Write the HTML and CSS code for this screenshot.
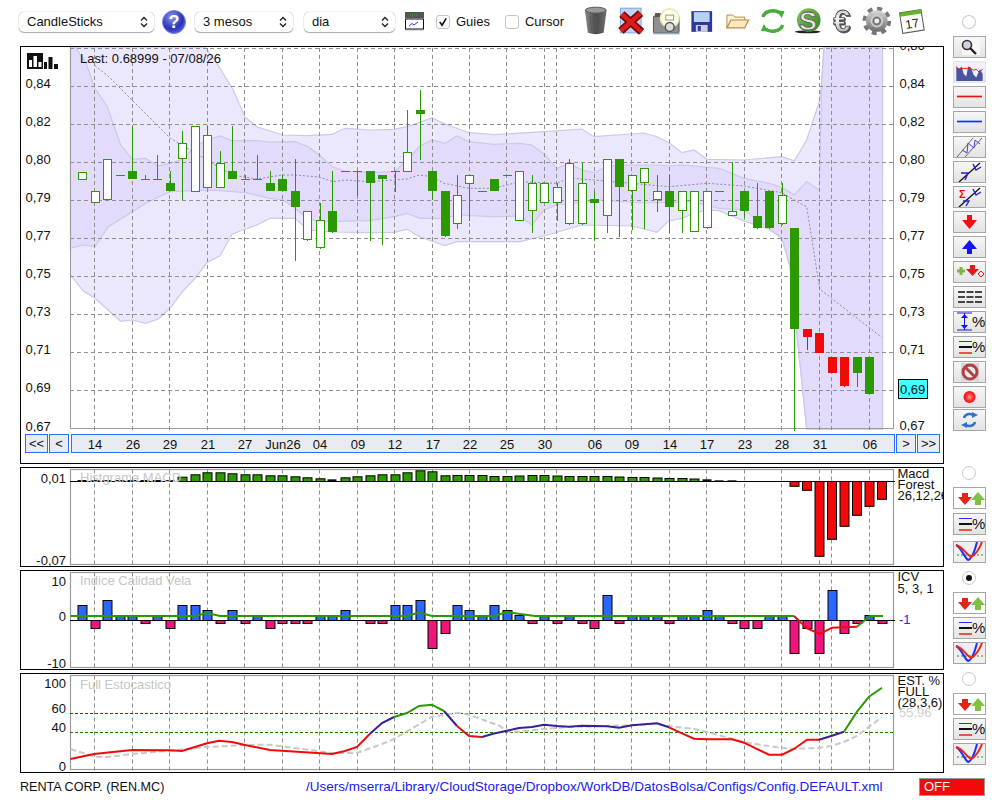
FILE: index.html
```html
<!DOCTYPE html>
<html lang="en">
<head>
    <meta charset="UTF-8">
    <title>RENTA CORP. (REN.MC)</title>
    <link rel="stylesheet" href="styles.css">
</head>
<body>
<svg class="defs">
    <defs>
        <linearGradient id="g-trash" x1="0" y1="0" x2="1" y2="0">
            <stop offset="0" stop-color="#8a8a8a"/><stop offset=".5" stop-color="#4a4a4a"/><stop offset="1" stop-color="#6e6e6e"/>
        </linearGradient>
        <linearGradient id="g-green" x1="0" y1="0" x2="1" y2="1">
            <stop offset="0" stop-color="#8bd04f"/><stop offset="1" stop-color="#2e7b2e"/>
        </linearGradient>
        <linearGradient id="g-silver" x1="0" y1="0" x2="0" y2="1">
            <stop offset="0" stop-color="#d8d8d8"/><stop offset="1" stop-color="#6c6c6c"/>
        </linearGradient>
        <linearGradient id="g-euro" x1="0" y1="0" x2="0" y2="1">
            <stop offset="0" stop-color="#bdbdbd"/><stop offset=".5" stop-color="#f4f4f4"/><stop offset="1" stop-color="#8c8c8c"/>
        </linearGradient>
        <radialGradient id="g-help" cx=".4" cy=".3" r=".8">
            <stop offset="0" stop-color="#8b97ee"/><stop offset=".6" stop-color="#2b33b8"/><stop offset="1" stop-color="#5a6ce0"/>
        </radialGradient>
        <radialGradient id="g-ball" cx=".5" cy=".5" r=".5">
            <stop offset="0" stop-color="#ff9a9a"/><stop offset=".7" stop-color="#f22"/><stop offset="1" stop-color="#e11"/>
        </radialGradient>
    </defs>
    <symbol id="i-updown" viewBox="0 0 31 20">
        <polygon points="8,5 14,5 14,9 18,9 11,17 4,9 8,9" fill="#e2231a"/>
        <polygon points="21,17 27,17 27,12 31,12 24,4 17,12 21,12" fill="#7dc242"/>
    </symbol>
    <symbol id="i-lines" viewBox="0 0 31 20">
        <rect x="5" y="4" width="13" height="1" fill="#2030ff"/>
        <rect x="5" y="9" width="13" height="2" fill="#111"/>
        <rect x="5" y="15" width="13" height="2" fill="#f05040"/>
        <text x="18" y="15" class="pct">%</text>
    </symbol>
    <symbol id="i-curves" viewBox="0 0 31 20">
        <rect width="31" height="20" fill="#efefef"/>
        <path d="M3 13H30" stroke="#2a9a00" stroke-dasharray="2 2" fill="none"/>
        <path d="M2 3C7 5 10 15 14 18 18 17 21 8 23 0" stroke="#2030ff" stroke-width="2" fill="none"/>
        <path d="M2 3C9 5 13 13 17 15 21 13 25 8 28 0" stroke="#e22" stroke-width="2" fill="none"/>
    </symbol>
</svg>

<div class="page">
    <div class="left">
        <div class="toolbar">
            <div class="select sel-type"><span>CandleSticks</span><svg class="chev" viewBox="0 0 8 12"><path d="M1 4.5 4 1.5 7 4.5M1 7.5 4 10.5 7 7.5"/></svg></div>
            <svg class="help" viewBox="0 0 24 24">
                <circle cx="12" cy="12" r="11.5" fill="url(#g-help)" stroke="#7b8ae0"/>
                <text x="12" y="18" class="help-mark">?</text>
            </svg>
            <div class="select sel-range"><span>3 mesos</span><svg class="chev" viewBox="0 0 8 12"><path d="M1 4.5 4 1.5 7 4.5M1 7.5 4 10.5 7 7.5"/></svg></div>
            <div class="select sel-period"><span>dia</span><svg class="chev" viewBox="0 0 8 12"><path d="M1 4.5 4 1.5 7 4.5M1 7.5 4 10.5 7 7.5"/></svg></div>
            <svg class="win" viewBox="0 0 19 19">
                <rect width="19" height="19" fill="#ddd"/>
                <rect width="19" height="6" fill="#555"/>
                <path d="M5 3H13" stroke="#2c2" stroke-dasharray="1 1"/>
                <rect x=".5" y="7" width="18" height="10" fill="#fff" stroke="#111"/>
                <path d="M4 14 7 11.5 9 13 13 10" stroke="#2030ff" fill="none"/>
            </svg>
            <label class="check on"><svg viewBox="0 0 13 13"><path d="M3 6.5 5.5 10 10 2.5"/></svg></label>
            <span class="check-label">Guies</span>
            <label class="check check-2"></label>
            <span class="check-label">Cursor</span>

            <div class="icons">
                <svg viewBox="0 0 36 44">
                    <path d="M7 10Q18 5 29 10L26 33Q18 36 10 33Z" fill="url(#g-trash)"/>
                    <ellipse cx="18" cy="10" rx="10.5" ry="3" fill="#999" stroke="#555"/>
                    <path d="M12 16 14 31M18 16V32M24 16 22 31" stroke="#5c5c5c" fill="none"/>
                </svg>
                <svg viewBox="0 0 36 44">
                    <rect x="7.5" y="8" width="21" height="25" fill="#bdd4f7" stroke="#7fa3e0"/>
                    <path d="M8 31 28 13M9 14 29 32" stroke="#7c0404" stroke-width="8" fill="none"/>
                    <path d="M8 31 28 13M9 14 29 32" stroke="#d91c1c" stroke-width="4.5" fill="none"/>
                </svg>
                <svg viewBox="0 0 36 44">
                    <rect x="4.5" y="16" width="26" height="17" rx="1" fill="#8e8e8e" stroke="#555"/>
                    <rect x="6" y="13" width="8" height="4" fill="#555"/>
                    <circle cx="21" cy="18" r="9.5" fill="#fffde8" stroke="#ece8b4" stroke-width="1.5"/>
                    <rect x="17" y="15" width="8" height="5" fill="none" stroke="#999"/>
                    <circle cx="21" cy="27" r="4.5" fill="#ddd" stroke="#555" stroke-width="1.5"/>
                    <rect x="4" y="33" width="27" height="1.5" fill="#9ab"/>
                </svg>
                <svg viewBox="0 0 36 44">
                    <rect x="7.500" y="11" width="21" height="21" fill="#2f359f"/>
                    <rect x="10" y="12" width="16" height="10" fill="#b3d2f4"/>
                    <rect x="12" y="25" width="12" height="7" fill="#ccd"/>
                    <rect x="14" y="26" width="3" height="5" fill="#2f359f"/>
                </svg>
                <svg viewBox="0 0 36 44">
                    <path d="M7 28V15H13L15 17H25V20" fill="#fdf3d8" stroke="#b98a4a"/>
                    <path d="M7 28 11 20H29L25 28Z" fill="#fce8bd" stroke="#b98a4a" stroke-width="1.2"/>
                </svg>
                <svg viewBox="0 0 36 44">
                    <path d="M8 17C10 10 21 9 25 13" stroke="#49ab3a" stroke-width="3.500" fill="none"/>
                    <polygon points="22,10 30,11 27,18" fill="#49ab3a"/>
                    <path d="M28 25C26 32 15 33 11 29" stroke="#49ab3a" stroke-width="3.500" fill="none"/>
                    <polygon points="14,32 6,31 9,24" fill="#49ab3a"/>
                </svg>
                <svg viewBox="0 0 36 44">
                    <ellipse cx="17" cy="32" rx="13" ry="1.5" fill="#222"/>
                    <circle cx="18" cy="20" r="12" fill="url(#g-green)"/>
                    <text x="17" y="30" class="coin">S</text>
                </svg>
                <svg viewBox="0 0 36 44">
                    <text x="16" y="32" class="euro">€</text>
                </svg>
                <svg viewBox="0 0 36 44">
                    <circle cx="15" cy="21" r="12.500" fill="none" stroke="#777" stroke-width="4" stroke-dasharray="5 4.82"/>
                    <circle cx="15" cy="21" r="11" fill="url(#g-silver)"/>
                    <circle cx="15" cy="21" r="5.500" fill="#777" stroke="#ccc" stroke-width="2"/>
                    <circle cx="15" cy="21" r="2.500" fill="#eee"/>
                </svg>
                <svg viewBox="0 0 36 44">
                    <g transform="rotate(-9 15 21)">
                        <rect x="4" y="11" width="22" height="21" fill="#fff" stroke="#555"/>
                        <rect x="4" y="11" width="22" height="4" fill="#63b42d"/>
                        <text x="15" y="28" class="cal">17</text>
                    </g>
                </svg>
            </div>
        </div>

        <div class="panels">
            <div class="panel panel-main">
                <svg id="chart-main" class="plot plot-main" viewBox="21 47 922 385"></svg>
                <div class="datebar">
                    <button class="nav nav-2">&lt;&lt;</button>
                    <button class="nav nav-1">&lt;</button>
                    <div class="dates"><svg id="chart-dates" viewBox="71 435 822 17"></svg></div>
                    <button class="nav nav-1">&gt;</button>
                    <button class="nav nav-2">&gt;&gt;</button>
                </div>
            </div>
            <div class="panel panel-sub">
                <svg id="chart-macd" class="plot" viewBox="21 468 922 98"></svg>
            </div>
            <div class="panel panel-sub">
                <svg id="chart-icv" class="plot" viewBox="21 571 922 98"></svg>
            </div>
            <div class="panel panel-sub">
                <svg id="chart-sto" class="plot" viewBox="21 674 922 98"></svg>
            </div>
        </div>
    </div>

    <div class="side">
        <span class="radio"></span>
        <div class="tools">
            <div class="tool"><svg viewBox="0 0 31 20"><rect x="8" y="1" width="18" height="17" fill="#f8f8f8"/><circle cx="13" cy="8" r="4.5" fill="#cfd4d8" stroke="#333" stroke-width="1.6"/><path d="M16 11 22 17" stroke="#222" stroke-width="2.4"/></svg></div>
            <div class="tool tool-flat"><svg viewBox="0 0 31 22"><rect width="31" height="22" fill="#eef0fa"/><path d="M1 21V4L4 8 7 5 9 13 12 16 14 5 17 6 20 14 23 17 25 12 27 8 30 13V21Z" fill="#47569f"/><path d="M1 8 6 7H16L20 9 23 8 26 11 30 8" stroke="#e11" fill="none"/></svg></div>
            <div class="tool"><svg viewBox="0 0 31 20"><rect x="3" y="8" width="25" height="3" fill="#f6a0a0"/><rect x="3" y="9" width="25" height="1" fill="#e11"/></svg></div>
            <div class="tool"><svg viewBox="0 0 31 20"><rect x="3" y="8" width="25" height="3" fill="#9ab0ff"/><rect x="3" y="9" width="25" height="1" fill="#1428ff"/></svg></div>
            <div class="tool"><svg viewBox="0 0 31 20"><path d="M3 20 19 1M11 20 28 1" stroke="#666" fill="none"/><path d="M8 13 13 16 14 6 20 11 21 3 26 7" stroke="#4b3bf0" fill="none"/></svg></div>
            <div class="tool"><svg viewBox="0 0 31 20"><path d="M5 20 26 1" stroke="#111" stroke-width="1.3" fill="none"/><path d="M19 2 22 8 27 5M7 11 14 11 11 18" stroke="#2a1fd0" stroke-width="1.4" fill="none"/></svg></div>
            <div class="tool"><svg viewBox="0 0 31 20"><path d="M5 20 26 1" stroke="#111" stroke-width="1.3" fill="none"/><path d="M19 2 22 8 27 5M9 14H15L12 19" stroke="#2a1fd0" stroke-width="1.4" fill="none"/><text x="5" y="11" class="sigma">Σ</text></svg></div>
            <div class="tool"><svg viewBox="0 0 31 20"><polygon points="13,3 18,3 18,8 23,8 15.500,17 8,8 13,8" fill="#f01010"/></svg></div>
            <div class="tool"><svg viewBox="0 0 31 20"><polygon points="13,17 18,17 18,12 23,12 15.500,3 8,12 13,12" fill="#1414f0"/></svg></div>
            <div class="tool"><svg viewBox="0 0 31 20"><path d="M3 9H11M7 5V13" stroke="#7db742" stroke-width="3"/><polygon points="16,3 21,3 21,7 25,7 18.500,14 12,7 16,7" fill="#d92020"/><polygon points="27,9 30,12 27,15 24,12" fill="#fff" stroke="#e11"/></svg></div>
            <div class="tool"><svg viewBox="0 0 31 20"><path d="M4 5H28M4 10H28M4 15H28" stroke="#444" stroke-width="2" stroke-dasharray="7 1.500" fill="none"/></svg></div>
            <div class="tool"><svg viewBox="0 0 31 20"><path d="M3 1H18M3 18H18" stroke="#1414f0"/><path d="M10.500 1V18" stroke="#1414f0"/><polygon points="10.500,2 14,6 7,6" fill="#1414f0"/><polygon points="10.500,17 14,13 7,13" fill="#1414f0"/><text x="18" y="15" class="pct">%</text></svg></div>
            <div class="tool"><svg><use href="#i-lines"/></svg></div>
            <div class="tool"><svg viewBox="0 0 31 20"><rect x="7" y="1" width="18" height="18" fill="#d5d5da"/><circle cx="16" cy="10" r="7" fill="#eee" stroke="#b34040" stroke-width="3"/><path d="M11 5 21 15" stroke="#b34040" stroke-width="3"/></svg></div>
            <div class="tool"><svg viewBox="0 0 31 20"><circle cx="15.500" cy="10" r="6" fill="url(#g-ball)"/></svg></div>
            <div class="tool tool-last"><svg viewBox="0 0 31 20"><path d="M10 8C11 4 16 3 19 5" stroke="#2f6fd0" stroke-width="2.500" fill="none"/><polygon points="18,2 24,5 18,8" fill="#2f6fd0"/><path d="M21 12C20 16 15 17 12 15" stroke="#2f6fd0" stroke-width="2.500" fill="none"/><polygon points="13,12 7,15 13,18" fill="#2f6fd0"/></svg></div>
        </div>

        <div class="side-group group-macd">
            <span class="radio"></span>
            <div class="tool tool-white"><svg><use href="#i-updown"/></svg></div>
            <div class="tool tool-push"><svg><use href="#i-lines"/></svg></div>
            <div class="tool tool-push2"><svg><use href="#i-curves"/></svg></div>
        </div>
        <div class="side-group">
            <span class="radio radio-on"></span>
            <div class="tool tool-white"><svg><use href="#i-updown"/></svg></div>
            <div class="tool"><svg><use href="#i-lines"/></svg></div>
            <div class="tool"><svg><use href="#i-curves"/></svg></div>
        </div>
        <div class="side-group">
            <span class="radio"></span>
            <div class="tool tool-white"><svg><use href="#i-updown"/></svg></div>
            <div class="tool"><svg><use href="#i-lines"/></svg></div>
            <div class="tool"><svg><use href="#i-curves"/></svg></div>
        </div>
    </div>

    <div class="status">
        <span class="status-name">RENTA CORP. (REN.MC)</span>
        <span class="status-path">/Users/mserra/Library/CloudStorage/Dropbox/WorkDB/DatosBolsa/Configs/Config.DEFAULT.xml</span>
        <span class="status-off">OFF</span>
    </div>
</div>

<script src="chart.js"></script>
</body>
</html>
```
FILE: styles.css
```css
* {
    box-sizing: border-box;
}

body {
    margin: 0;
    background: #fff;
    color: #111;
    font: 13px "Liberation Sans", Arial, sans-serif;
}

.defs {
    position: absolute;
    width: 0;
    height: 0;
}

.page {
    display: grid;
    grid-template-columns: 944px 56px;
    grid-template-rows: 773px 27px;
    width: 1000px;
    height: 800px;
    overflow: hidden;
}

/* toolbar */
.toolbar {
    display: flex;
    align-items: center;
    height: 43px;
    padding-left: 19px;
}

.select {
    display: flex;
    align-items: center;
    justify-content: space-between;
    height: 20px;
    padding: 0 6px 0 8px;
    background: #fff;
    border-radius: 5px;
    box-shadow: 0 0 1px rgba(0, 0, 0, .45), 0 1px 1px rgba(0, 0, 0, .3);
    font-size: 13px;
}

.sel-type {
    width: 135px;
}

.sel-range {
    width: 98px;
    margin-left: 9px;
}

.sel-period {
    width: 91px;
    margin-left: 11px;
}

.chev {
    width: 8px;
    height: 12px;
}

.chev path {
    fill: none;
    stroke: #222;
    stroke-width: 1.4;
}

.help {
    width: 24px;
    height: 24px;
    margin-left: 8px;
}

.help-mark {
    fill: #fff;
    font: bold 18px "Liberation Sans", sans-serif;
    text-anchor: middle;
}

.win {
    width: 19px;
    height: 19px;
    margin-left: 10px;
}

.check {
    display: block;
    width: 14px;
    height: 14px;
    margin-left: 12px;
    background: #fff;
    border: 1px solid #c4c4c4;
    border-radius: 3px;
}

.check svg {
    display: block;
    width: 12px;
    height: 12px;
}

.check path {
    fill: none;
    stroke: #111;
    stroke-width: 1.7;
}

.check-2 {
    margin-left: 15px;
}

.check-label {
    margin-left: 6px;
    font-size: 13px;
}

.icons {
    display: flex;
    margin-left: 14px;
}

.icons svg {
    flex: none;
    width: 35.5px;
    height: 44px;
}

.coin {
    fill: #e4e6e2;
    stroke: #555;
    stroke-width: .8;
    font: bold 27px "Liberation Sans", sans-serif;
    text-anchor: middle;
}

.euro {
    fill: url(#g-euro);
    stroke: #444;
    stroke-width: .8;
    font: bold 31px "Liberation Sans", sans-serif;
    text-anchor: middle;
    filter: drop-shadow(1px 1px 0 #555);
}

.cal {
    fill: #222;
    font: 12.5px "Liberation Sans", sans-serif;
    text-anchor: middle;
}

.pct {
    fill: #111;
    font: 15px "Liberation Sans", sans-serif;
}

.sigma {
    fill: #e11;
    font: bold 11px "Liberation Sans", sans-serif;
}

/* chart panels */
.panels {
    display: flex;
    flex-direction: column;
    gap: 3px;
    padding: 3px 0 0 20px;
}

.panel {
    width: 924px;
    background: #fff;
    border: 1px solid #000;
}

.panel-main {
    height: 418px;
}

.panel-sub {
    height: 100px;
}

.plot {
    display: block;
    width: 922px;
    height: 98px;
}

.plot-main {
    height: 385px;
}

.plot text {
    fill: #111;
    font: 13px "Liberation Sans", sans-serif;
}

.plot .wm {
    fill: #c6c6c6;
}

.plot .blue {
    fill: #2222ee;
}

.plot .off {
    fill: #cfcfcf;
}

/* date bar */
.datebar {
    display: flex;
    align-items: stretch;
    height: 19px;
    margin-top: 2px;
    padding-left: 4px;
}

.nav {
    height: 19px;
    margin: 0 1px 0 0;
    padding: 0;
    background: #e9ebf2;
    border: 1px solid #2f6bff;
    color: #111;
    font: 13px "Liberation Sans", sans-serif;
}

.nav-2 {
    width: 23px;
}

.nav-1 {
    width: 20px;
}

.dates {
    width: 824px;
    margin: 0 1px 0 1px;
    background: #e9ebf2;
    border: 1px solid #2f6bff;
}

.dates svg {
    display: block;
    width: 822px;
    height: 17px;
}

.dates text {
    fill: #111;
    font: 13px "Liberation Sans", sans-serif;
    text-anchor: middle;
}

/* right column */
.side {
    display: flex;
    flex-direction: column;
    padding: 15px 0 0 9px;
}

.radio {
    display: block;
    position: relative;
    width: 14px;
    height: 14px;
    margin-left: 9px;
    background: #fff;
    border: 1px solid #c8c8c8;
    border-radius: 50%;
}

.radio-on::after {
    content: "";
    position: absolute;
    top: 3px;
    left: 3px;
    width: 6px;
    height: 6px;
    background: #111;
    border-radius: 50%;
}

.tools {
    display: flex;
    flex-direction: column;
    gap: 3px;
    margin-top: 7px;
}

.tool {
    width: 33px;
    height: 22px;
    background: linear-gradient(#f6f6f6, #e3e3e3);
    border: 1px solid #a6a6a6;
}

.tool svg {
    display: block;
    width: 31px;
    height: 20px;
}

.tool-white {
    background: #fff;
}

.tool-flat {
    border-color: #dfe3f5;
}

.tool-last {
    margin-top: -2px;
}

.side-group {
    display: flex;
    flex-direction: column;
    gap: 3px;
    height: 103px;
}

.side-group .radio {
    margin-bottom: 4px;
}

.group-macd {
    height: 107px;
    margin-top: 35px;
}

.tool-push {
    margin-top: 1px;
}

.tool-push2 {
    margin-top: 3px;
}

/* status line */
.status {
    grid-column: 1 / 3;
    display: flex;
    align-items: center;
    padding: 0 15px 0 20px;
}

.status-name {
    width: 286px;
    font-size: 12.6px;
}

.status-path {
    color: #1a1aee;
    font-size: 13.5px;
}

.status-off {
    width: 66px;
    height: 18px;
    margin-left: auto;
    padding-left: 4px;
    background: #f20a0a;
    border: 1px solid #999;
    color: #fff;
    font-size: 13px;
    line-height: 16px;
}
```
FILE: chart.js
```js
var NS = "http://www.w3.org/2000/svg";
var GREEN = "#2a9a00";
var RED = "#f20a0a";
var GRID = "#8f8f8f";

// vertical grid lines + the labels under them
var aGrid = [94, 132, 169, 207, 244, 282, 319, 357, 394, 432, 469, 506, 544, 556, 594, 631, 669, 706, 744, 781, 819, 831, 869];
var aDates = [[94, "14"], [132, "26"], [169, "29"], [207, "21"], [244, "27"], [282, "Jun26"], [319, "04"], [357, "09"], [394, "12"],
    [432, "17"], [469, "22"], [506, "25"], [544, "30"], [594, "06"], [631, "09"], [669, "14"], [706, "17"], [744, "23"], [781, "28"], [819, "31"], [869, "06"]];

// type, body top, body bottom, high, low
var aCandles = [
    ["w", 172, 179, 172, 180], ["w", 191, 202, 191, 203], ["w", 159, 199, 159, 199], ["d", 175, 175, 175, 175],
    ["f", 171, 179, 126, 179], ["d", 179, 179, 175, 179], ["d", 179, 179, 155, 179], ["f", 183, 191, 171, 191],
    ["w", 143, 158, 131, 200], ["w", 126, 191, 126, 192], ["w", 135, 187, 126, 187], ["w", 163, 187, 151, 188],
    ["f", 171, 179, 126, 179], ["d", 179, 179, 175, 179], ["d", 179, 179, 155, 179], ["f", 183, 191, 171, 191],
    ["f", 179, 191, 175, 191], ["f", 191, 207, 159, 261], ["w", 211, 239, 211, 241], ["w", 220, 247, 203, 249],
    ["f", 211, 232, 171, 233], ["d", 171, 171, 171, 171], ["d", 171, 171, 171, 196], ["f", 171, 183, 171, 241],
    ["f", 175, 179, 175, 245], ["d", 171, 171, 171, 192], ["w", 152, 171, 110, 172], ["f", 110, 114, 90, 160],
    ["f", 171, 191, 171, 200], ["f", 191, 236, 191, 237], ["w", 195, 223, 175, 229], ["w", 175, 183, 175, 221],
    ["d", 191, 191, 191, 191], ["f", 179, 191, 179, 191], ["d", 175, 175, 175, 175], ["w", 171, 220, 171, 221],
    ["w", 183, 210, 175, 233], ["w", 183, 202, 183, 203], ["w", 187, 202, 183, 221], ["w", 163, 223, 159, 225],
    ["w", 183, 223, 163, 225], ["f", 199, 203, 191, 241], ["w", 159, 215, 159, 233], ["f", 159, 187, 159, 237],
    ["w", 175, 190, 175, 230], ["w", 168, 182, 168, 229], ["w", 191, 199, 175, 212], ["f", 191, 207, 175, 233],
    ["w", 191, 210, 191, 233], ["w", 191, 231, 191, 232], ["w", 191, 227, 191, 229], ["d", 191, 191, 191, 191],
    ["w", 211, 215, 162, 216], ["f", 191, 211, 191, 218], ["f", 216, 228, 183, 229], ["f", 191, 228, 191, 229],
    ["w", 195, 223, 183, 225], ["f", 228, 329, 228, 431], ["r", 329, 337, 329, 350], ["r", 333, 353, 333, 353],
    ["r", 357, 373, 357, 373], ["r", 357, 386, 357, 387], ["f", 357, 373, 357, 387], ["f", 357, 394, 357, 394]
];

var aOuter = [[70.5, 47], [205, 47], [216.7, 63], [233.3, 90], [245, 117], [256.7, 126.7], [283, 135], [307, 135.7], [332, 134.3], [345, 128.3],
    [370, 130], [394, 129.3], [407, 126.7], [432, 118], [445, 124], [469, 132.7], [494, 134.7], [544, 131.7], [582, 129], [594, 136.7],
    [644, 133], [657, 136.7], [669, 142.7], [682, 152.7], [694, 150], [707, 159.3], [744, 160], [782, 156.7], [794.3, 160.7], [806.7, 140],
    [819.3, 101.7], [821.7, 83], [824, 47], [882.5, 47], [882.5, 429], [806.7, 429], [790, 266.7], [782, 238.3], [769, 229.3], [744, 221],
    [719, 210.7], [707, 210], [694, 213.3], [682, 218.3], [669, 220.7], [657, 232.3], [632, 226], [582, 225], [544, 236], [520, 241.7],
    [457, 241.7], [445, 245.7], [420, 237], [407, 229.3], [394, 232.3], [370, 232.7], [333, 232], [308, 230], [295, 218.3], [270, 218.3],
    [257, 225], [245, 229.3], [232.3, 234], [220, 255.7], [207.3, 262.3], [195, 278.3], [183.3, 290.7], [170, 308.3], [158.3, 319],
    [145.7, 323.3], [132.3, 320], [120.7, 321.3], [95, 298.3], [83.3, 291], [70.5, 275]];

var aInner = [[70.5, 47], [75, 47], [86, 63], [95, 88.3], [107.3, 106.7], [120.7, 145], [132.3, 159.3], [145.7, 158.3], [157.3, 166], [170, 163.3],
    [182.3, 159.3], [195, 146.7], [207.3, 140], [220, 136], [232.3, 140.7], [257.3, 140.7], [270, 142], [295, 141.7], [308.3, 146.7], [319.3, 155],
    [332.3, 166.7], [345, 171], [370, 172.7], [394.3, 171.7], [407, 160], [420, 146], [432, 140], [445, 143.3], [457, 136], [469, 141.7],
    [494, 144.3], [520, 143.3], [532, 145], [544, 154.3], [557, 168.3], [569, 163.3], [582, 170], [594, 172.7], [607, 166.7], [619, 165],
    [657, 165], [669, 166], [682, 165], [719, 168.3], [744, 178.3], [769, 183.3], [782, 187.3], [794.3, 195], [806.7, 181.7], [819.3, 190],
    [821.7, 83], [824, 47], [882.5, 47], [882.5, 429], [806.7, 429], [790, 266.7], [782, 238.3], [769, 228.3], [744, 210], [719, 208.3],
    [694, 201.7], [644, 203], [600, 200], [557, 205], [544, 210], [532, 225], [520, 216], [494, 216.7], [457, 215], [445, 218.3], [420, 218.3],
    [407, 213.3], [394.3, 216.7], [369, 220.7], [319, 221.7], [307.3, 218.3], [295, 208.3], [283, 200], [270, 198.3], [245, 192.7], [220, 190.7],
    [207.3, 190], [170, 191.7], [145.7, 203.3], [108.3, 226.7], [95, 246.7], [83.3, 245], [70.5, 248.3]];

var aAverage = [[95, 65.7], [108, 76], [132, 100], [170, 138], [187, 148], [207, 160], [220, 168], [232, 175], [257, 179], [282, 175], [295, 175],
    [319, 177], [333, 181.7], [345, 180], [370, 181.7], [407, 179], [419, 175], [432, 176.7], [444, 183.3], [469, 188.3], [494, 188.3], [520, 181.7],
    [557, 183.3], [569, 178], [594, 180], [669, 186.7], [707, 183.3], [744, 186], [782, 192.7], [800, 203.3], [806.7, 206.7], [811.7, 238],
    [816.7, 270], [820, 289.3], [881.7, 337.3]];

// tops of the MACD bars, index 0 = first candle
var aMacd = [480, 480, 480, 480, 480, 480, 480, 480, 476.7, 474.3, 472.3, 472.3, 473.3, 474.3, 474.3, 475.3, 475.3, 476.3, 477.3, 478.3, 479.3, 477.3, 476.3, 475.3,
    474.3, 474.3, 472.3, 470.3, 471.3, 475.3, 475, 475, 475, 476, 476, 475.5, 475, 475, 475.5, 476, 476, 476, 476, 476.5, 477, 477, 477.5, 478, 478, 478.5, 479.3,
    480.3, 480.3, 481, 481, 481];
var aMacdDown = [[794, 486.3], [806.5, 490.3], [819, 556.3], [831.5, 539.3], [844, 526.3], [856.5, 515.3], [869, 506.3], [881.5, 499.3]];

var aIcv = [3, -2, 4, 1, 1, -1, 1, -2, 3, 3, 2, -1, 2, -1, 1, -2, -1, -1, -1, 1, 1, 2, 0, -1, -1, 3, 3, 4, -6, -3,
    3, 2, 1, 3, 2, 1, -1, 1, -1, 1, -1, -2, 5, -1, 1, 1, 1, -1, 1, 1, 2, 1, -1, -2, -2, 1, 1, -7, -2, -7, 6, -3, -1, 1, -1];

var aSignal = [[70.5, 749], [95, 757], [108, 757], [132, 754], [169, 750.7], [207, 747], [245, 745], [270, 744.7], [332, 753], [357, 753], [382, 744],
    [394, 739], [432, 716.7], [457, 712.7], [469, 714.7], [500, 726], [507, 731.5], [519, 731.7], [544, 729], [569, 727], [594, 726.5], [657, 724],
    [669, 726], [694, 729], [707, 732], [744, 742], [781, 748], [794, 748.7], [819, 748], [831, 746], [844, 742], [857, 736], [882, 717]];
var aStoch = [
    [RED, [[70.5, 759], [94, 754], [132, 750], [169, 750.3], [182, 751], [207, 743.3], [219, 740.7], [232, 742], [245, 745], [270, 750], [332, 754], [345, 751], [357, 747], [370, 733.7]]],
    ["#3a1f96", [[370, 733.7], [382, 723], [394, 717]]],
    [GREEN, [[394, 717], [407, 713], [419, 706], [432, 704.7], [444, 711]]],
    ["#3a1f96", [[444, 711], [457, 726]]],
    [RED, [[457, 726], [469, 736], [482, 737]]],
    ["#3a1f96", [[482, 737], [494, 733.5], [507, 730.7], [519, 728], [532, 727], [544, 724.7], [557, 726], [569, 726.7], [582, 725.7], [607, 726.3], [619, 727.7], [632, 725.3], [657, 723.3], [669, 727.3]]],
    [RED, [[669, 727.3], [682, 733.3], [694, 738.7], [707, 739.3], [732, 739.3], [744, 742.7], [769, 754.7], [782, 754.7], [794, 749], [807, 739.7], [819, 739.7]]],
    ["#3a1f96", [[819, 739.7], [832, 735.7], [844, 731.7]]],
    [GREEN, [[844, 731.7], [857, 711.7], [869, 696.7], [882, 687.7]]]
];

function add(oSvg, tag, attrs, txt) {
    var o = document.createElementNS(NS, tag);
    for (var k in attrs) {
        o.setAttribute(k, attrs[k]);
    }
    if (txt) {
        o.textContent = txt;
    }
    oSvg.appendChild(o);
    return o;
}

function text(oSvg, x, y, txt, cls, anchor) {
    return add(oSvg, "text", {x: x, y: y, "class": cls || "", "text-anchor": anchor || "start"}, txt);
}

function line(oSvg, x1, y1, x2, y2, color, dash) {
    return add(oSvg, "line", {x1: x1, y1: y1, x2: x2, y2: y2, stroke: color, "stroke-dasharray": dash || "none"});
}

function poly(oSvg, pts, color, width, dash) {
    return add(oSvg, "polyline", {
        points: pts.join(" "), fill: "none", stroke: color, "stroke-width": width, "stroke-dasharray": dash || "none"
    });
}

function barX(i) {
    return Math.round(82.3 + 12.49 * i);
}

function frame(oSvg, top, bottom) {
    add(oSvg, "rect", {x: 70.5, y: top, width: 823, height: bottom - top, fill: "none", stroke: "#9a9a9a", "stroke-width": 1.2});
    for (var i = 0; i < aGrid.length; i++) {
        line(oSvg, aGrid[i] + .5, top, aGrid[i] + .5, bottom + 3, GRID, "4 3");
    }
}

function drawMain() {
    var oSvg = document.getElementById("chart-main");
    add(oSvg, "polygon", {points: aOuter.join(" "), fill: "#ebe7fd", stroke: "#cdc7ea", "stroke-width": 1.2});
    add(oSvg, "polygon", {points: aInner.join(" "), fill: "#e2dbfb", stroke: "#cdc7ea", "stroke-width": 1.2});

    var aY = [["0,86", 48], ["0,84", 86], ["0,82", 124], ["0,80", 162], ["0,79", 200], ["0,77", 238], ["0,75", 276], ["0,73", 314], ["0,71", 352], ["0,69", 390], ["0,67", 428]];
    for (var i = 0; i < aY.length; i++) {
        if (i > 0 && i < 10) {
            line(oSvg, 70, aY[i][1] + .5, 893, aY[i][1] + .5, GRID, "4 3");
            text(oSvg, 25.5, aY[i][1] + 2, aY[i][0]);
        }
        text(oSvg, 899.5, aY[i][1] + 2, aY[i][0]);
    }
    line(oSvg, 70, 48.5, 893, 48.5, GRID, "4 3");
    text(oSvg, 25.5, 431, "0,67");

    line(oSvg, 70.5, 47, 70.5, 429, "#9a9a9a");
    line(oSvg, 70, 428.5, 894, 428.5, "#9a9a9a");
    line(oSvg, 893.5, 47, 893.5, 429, "#9a9a9a");
    for (i = 0; i < aGrid.length; i++) {
        line(oSvg, aGrid[i] + .5, 48, aGrid[i] + .5, 431, GRID, "4 3");
    }
    poly(oSvg, aAverage, "#8f8aa8", 1, "2 2");

    for (i = 0; i < aCandles.length; i++) {
        var c = aCandles[i];
        var x = barX(i);
        var col = c[0] == "r" ? RED : GREEN;
        line(oSvg, x + .5, c[3], x + .5, c[4], col).setAttribute("stroke-width", 1);
        if (c[0] == "d") {
            line(oSvg, x - 4, c[1] + .5, x + 5, c[1] + .5, col);
        } else if (c[0] == "w") {
            add(oSvg, "rect", {x: x - 3.5, y: c[1] + .5, width: 8, height: c[2] - c[1], fill: "#fff", stroke: col});
        } else {
            add(oSvg, "rect", {x: x - 4, y: c[1], width: 9, height: c[2] - c[1], fill: col});
        }
    }

    // small bars logo at the corner
    add(oSvg, "rect", {x: 27, y: 53, width: 16, height: 16, fill: "#111"});
    add(oSvg, "path", {d: "M29 60h3v7h-3zM33.500 56h3.500v11h-3.500zM38.500 62h3v5h-3z", fill: "#fff"});
    add(oSvg, "path", {d: "M44 62h3v7h-3zM48.500 57h4v12h-4zM54 64h4v5h-4z", fill: "#111"});

    text(oSvg, 80, 63, "Last: 0.68999 - 07/08/26");

    add(oSvg, "rect", {x: 898.5, y: 379.5, width: 29, height: 19, fill: "#4ff", stroke: "#000"});
    text(oSvg, 900, 394, "0,69");

    var oDates = document.getElementById("chart-dates");
    for (i = 0; i < aDates.length; i++) {
        text(oDates, aDates[i][0], 449, aDates[i][1]);
    }
}

function drawMacd() {
    var oSvg = document.getElementById("chart-macd");
    frame(oSvg, 469.5, 564.5);
    var i;
    for (i = 0; i < aMacd.length; i++) {
        var top = aMacd[i];
        if (top > 478.8) {
            add(oSvg, "rect", {x: barX(i) - 4.5, y: top, width: 9, height: 481 - top, fill: "#111"});
        } else {
            add(oSvg, "rect", {x: barX(i) - 4, y: top + .5, width: 9, height: 481 - top, fill: GREEN, stroke: "#000"});
        }
    }
    for (i = 0; i < aMacdDown.length; i++) {
        add(oSvg, "rect", {x: aMacdDown[i][0] - 4, y: 481.5, width: 9, height: aMacdDown[i][1] - 481.5, fill: RED, stroke: "#000"});
    }
    line(oSvg, 70, 481.5, 895, 481.5, "#000");
    text(oSvg, 80, 481.5, "Histgrama MACD", "wm");
    text(oSvg, 66, 482.5, "0,01", "", "end");
    text(oSvg, 66, 565, "-0,07", "", "end");
    text(oSvg, 897.5, 478, "Macd");
    text(oSvg, 897.5, 489, "Forest");
    text(oSvg, 897.5, 500, "26,12,26");
}

function drawIcv() {
    var oSvg = document.getElementById("chart-icv");
    frame(oSvg, 572.5, 667.5);
    text(oSvg, 80, 585, "Indice Calidad Vela", "wm");
    for (var i = 0; i < aIcv.length; i++) {
        var v = aIcv[i];
        if (v > 0) {
            add(oSvg, "rect", {x: barX(i) - 4, y: 620.5 - 5 * v, width: 9, height: 5 * v, fill: "#2a66ff", stroke: "#000"});
        } else if (v < 0) {
            add(oSvg, "rect", {x: barX(i) - 4, y: 620.5, width: 9, height: -5 * v - 2, fill: "#f0157a", stroke: "#000"});
        }
    }
    line(oSvg, 70, 620.5, 895, 620.5, "#000");
    poly(oSvg, [[70.5, 616], [195, 616], [207, 613], [220, 616], [407, 616], [419, 612.5], [432, 616], [494, 616], [507, 612], [520, 614], [535, 616], [794, 616]], GREEN, 2);
    poly(oSvg, [[794, 616], [807, 628.3], [820, 634], [832, 627.7], [857, 626.7]], RED, 2);
    poly(oSvg, [[857, 626.7], [870, 616], [883, 616]], GREEN, 2);
    text(oSvg, 66, 586, "10", "", "end");
    text(oSvg, 66, 620.5, "0", "", "end");
    text(oSvg, 66, 668, "-10", "", "end");
    text(oSvg, 897.5, 581, "ICV");
    text(oSvg, 897.5, 592.5, "5, 3, 1");
    text(oSvg, 899, 624, "-1", "blue");
}

function drawStoch() {
    var oSvg = document.getElementById("chart-sto");
    frame(oSvg, 675.5, 769.5);
    text(oSvg, 80, 688.5, "Full Estocastico", "wm");
    line(oSvg, 70, 713.5, 893, 713.5, "#d00000", "3 2");
    line(oSvg, 70, 732.5, 893, 732.5, "#1a7a00", "3 2");
    poly(oSvg, aSignal, "#c9c9c9", 2, "6 3");
    for (var i = 0; i < aStoch.length; i++) {
        poly(oSvg, aStoch[i][1], aStoch[i][0], 2);
    }
    text(oSvg, 66, 688, "100", "", "end");
    text(oSvg, 66, 713, "60", "", "end");
    text(oSvg, 66, 732, "40", "", "end");
    text(oSvg, 66, 771, "0", "", "end");
    text(oSvg, 897.5, 684.5, "EST. %");
    text(oSvg, 897.5, 695.5, "FULL");
    text(oSvg, 897.5, 706.5, "(28,3,6)");
    text(oSvg, 899, 717, "55,96", "off");
}

drawMain();
drawMacd();
drawIcv();
drawStoch();
```
